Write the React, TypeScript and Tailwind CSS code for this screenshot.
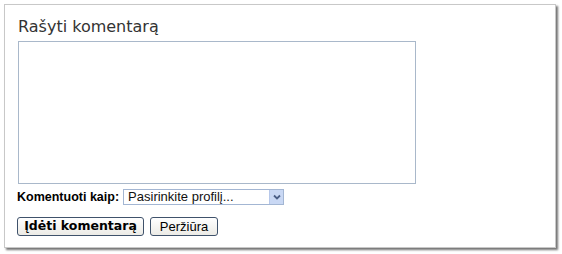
import React from "react";

export default function App() {
  return (
    <div className="w-[562px] h-[254px] bg-white pt-[4px] pl-[4px]">
      <div className="w-[552px] h-[244px] border border-[#c8c8c8] bg-white shadow-[2px_2px_2px_rgba(0,0,0,0.55)] pt-[12px] pl-[13px]">
        <h2
          className="text-[16px] leading-[20px] text-[#333333] mb-[4px] font-normal"
          style={{ fontFamily: '"DejaVu Sans", Verdana, sans-serif' }}
        >
          Rašyti komentarą
        </h2>
        <div className="w-[398px] h-[143px] border border-[#a9b8ca] bg-white" />
        <div
          className="flex items-center mt-[5px] h-[16px]"
          style={{ fontFamily: '"Liberation Sans", Arial, sans-serif' }}
        >
          <span className="text-[12.5px] font-bold text-black ml-[-1px] mr-[4px]">Komentuoti kaip:</span>
          <div className="w-[161px] h-[16px] border border-[#a3b6d3] bg-white flex items-center">
            <span className="flex-1 text-[13px] leading-[14px] text-[#111] pl-[4px]">Pasirinkite profilį...</span>
            <div className="w-[14px] h-[14px] bg-[#c9d8f4] border-l border-[#b7c8ea] flex items-center justify-center">
              <svg width="8" height="6" viewBox="0 0 8 6">
                <path d="M1 1.5 L4 4.5 L7 1.5" fill="none" stroke="#4b5f86" strokeWidth="1.8" />
              </svg>
            </div>
          </div>
        </div>
        <div className="flex mt-[12px] gap-[6px] ml-[-1px]">
          <div
            className="w-[127px] h-[19px] rounded-[3px] border border-[#3f526b] bg-gradient-to-b from-white to-[#ecebe6] flex items-center justify-center text-[12.5px] font-bold text-black"
            style={{ fontFamily: '"DejaVu Sans", Verdana, sans-serif' }}
          >
            Įdėti komentarą
          </div>
          <div
            className="w-[68px] h-[19px] rounded-[3px] border border-[#3f526b] bg-gradient-to-b from-white to-[#ecebe6] flex items-center justify-center text-[13px] text-black"
            style={{ fontFamily: '"Liberation Sans", Arial, sans-serif' }}
          >
            Peržiūra
          </div>
        </div>
      </div>
    </div>
  );
}
